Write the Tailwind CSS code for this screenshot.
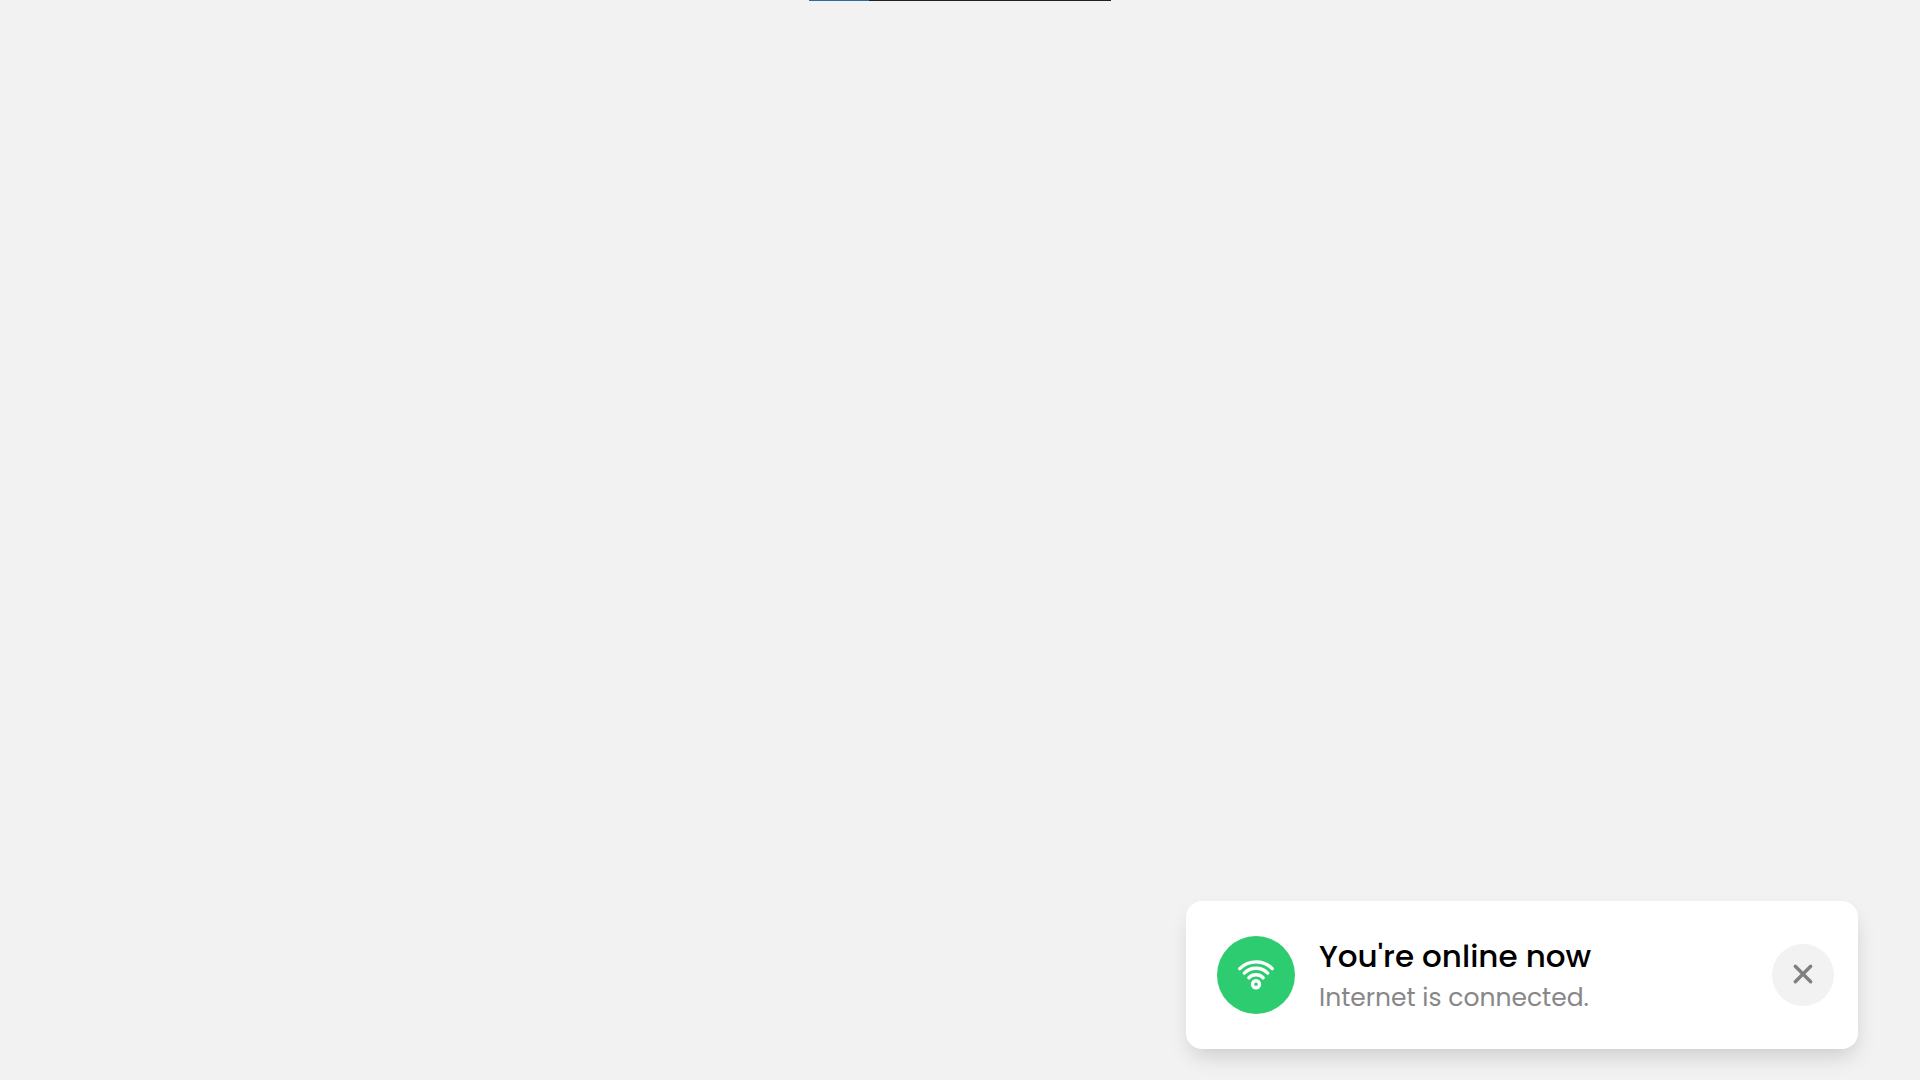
<!DOCTYPE html>
<html lang="en">
<head>
  <meta charset="UTF-8" />
  <meta name="viewport" content="width=device-width, initial-scale=1.0" />
  <title>Internet Connection Status</title>
  <script src="https://cdn.jsdelivr.net/npm/@tailwindcss/browser@4"></script>
</head>
<body class="flex min-h-screen flex-col bg-[#f2f2f2] font-['Poppins','Inter',sans-serif]">

  <!-- Top strip -->
  <div class="mx-auto flex h-px w-[302px]">
    <div class="w-1/5 bg-[#2b6ca3]"></div>
    <div class="flex-1 bg-[#231f20]"></div>
  </div>

  <!-- Toast -->
  <div role="status" class="mt-auto mr-[62px] mb-[31px] ml-auto flex w-full max-w-2xl items-center rounded-2xl bg-white py-8 pr-6 pl-[31px] shadow-[1px_11px_22px_-5px_rgba(0,0,0,0.17)]">
    <div class="flex size-[78px] shrink-0 items-center justify-center rounded-full bg-[#2ecc71]">
      <svg class="size-10" viewBox="-20 -20 40 40" fill="none" stroke="#fff" stroke-width="3.4" stroke-linecap="round">
        <path d="M-16.2 -6.4C-7 -15.4 7 -15.4 16.2 -6.4" />
        <path d="M-11.7 -1.9C-5.2 -8.3 5.2 -8.3 11.7 -1.9" />
        <path d="M-7.1 2.7C-3.2 -1.2 3.2 -1.2 7.1 2.7" />
        <circle cx="0" cy="9.2" r="3.5" />
      </svg>
    </div>
    <div class="ml-6 flex-1">
      <h1 class="text-[31px] leading-[46px] font-medium text-black">You're online now</h1>
      <p class="text-[25px] leading-[38px] text-[#878787]">Internet is connected.</p>
    </div>
    <button type="button" aria-label="Close" class="flex size-[62px] shrink-0 cursor-pointer items-center justify-center rounded-full bg-[#f2f2f2] text-[#808080]">
      <svg class="size-6" viewBox="0 0 24 24" fill="none" stroke="currentColor" stroke-width="3.4" stroke-linecap="round">
        <path d="M4.3 3.3L19.7 18.7M19.7 3.3L4.3 18.7" />
      </svg>
    </button>
  </div>

</body>
</html>
